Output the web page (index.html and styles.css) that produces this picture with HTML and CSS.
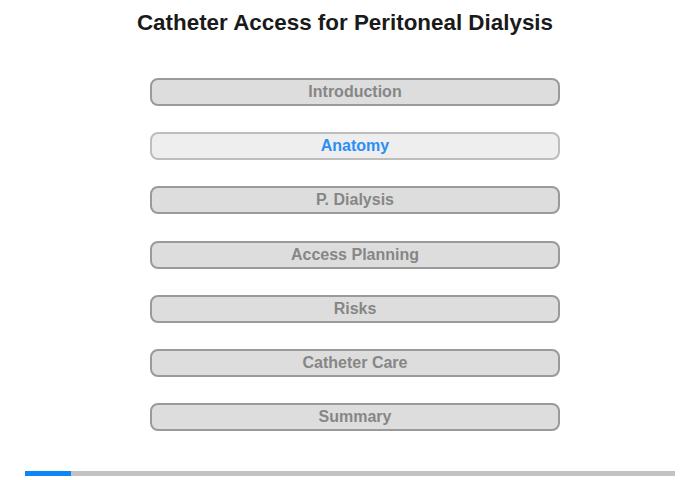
FILE: index.html
```html
<!DOCTYPE html>
<html>
<head>
<meta charset="utf-8">
<link rel="stylesheet" href="styles.css">
</head>
<body>
<div class="page">
  <h1 class="title">Catheter Access for Peritoneal Dialysis</h1>
  <nav class="menu">
    <div class="item">Introduction</div>
    <div class="item active">Anatomy</div>
    <div class="item">P. Dialysis</div>
    <div class="item">Access Planning</div>
    <div class="item">Risks</div>
    <div class="item">Catheter Care</div>
    <div class="item">Summary</div>
  </nav>
  <div class="progress"><div class="progress-fill" style="width:46px"></div></div>
</div>
</body>
</html>
```
FILE: styles.css
```css
html, body {
  margin: 0;
  padding: 0;
  background: #fff;
}
.page {
  width: 700px;
  height: 480px;
  display: flex;
  flex-direction: column;
  font-family: "Liberation Sans", Arial, sans-serif;
}
.title {
  margin: 0;
  padding-top: 10px;
  height: 78px;
  box-sizing: border-box;
  text-align: center;
  font-size: 22.4px;
  font-weight: bold;
  color: #1a1a1a;
  line-height: 26px;
  padding-right: 10px;
}
.menu {
  display: flex;
  flex-direction: column;
  gap: 26.2px;
  margin-left: 150px;
  width: 410px;
}
.item {
  box-sizing: border-box;
  height: 28px;
  border: 2px solid #9a9a9a;
  border-radius: 8px;
  background: #dddddd;
  color: #868686;
  font-size: 16px;
  font-weight: bold;
  text-align: center;
  line-height: 24px;
}
.item.active {
  background: #eeeeee;
  border-color: #bdbdbd;
  color: #2b8ef5;
}
.progress {
  margin-top: 40px;
  margin-left: 25px;
  width: 650px;
  height: 5px;
  background: #c2c2c2;
}
.progress-fill {
  height: 100%;
  background: #0a87f5;
}
```
